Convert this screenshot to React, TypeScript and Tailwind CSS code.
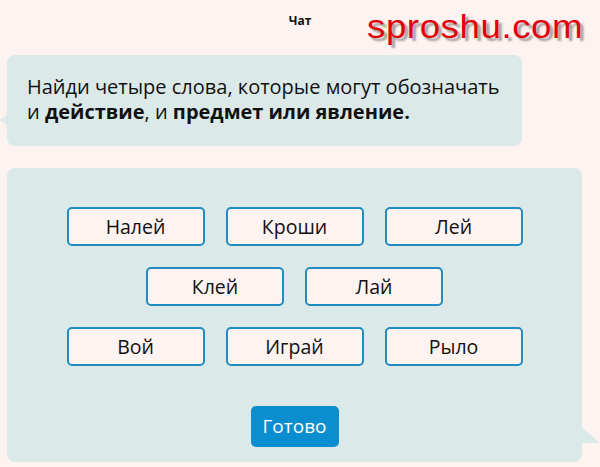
import React from "react";

const rows = [
  ["Налей", "Кроши", "Лей"],
  ["Клей", "Лай"],
  ["Вой", "Играй", "Рыло"],
];

export default function App() {
  return (
    <div
      className="relative w-[600px] h-[467px] overflow-hidden bg-[#fdf3f0] text-[#111]"
      style={{ fontFamily: '"Open Sans", "Noto Sans", sans-serif' }}
    >
      <div className="h-[55px] flex justify-center pt-[13px]">
        <span className="text-[12px] font-bold leading-[16px]">Чат</span>
      </div>

      <div
        className="absolute left-[367px] top-[6px] text-[34px] leading-[40px] text-[#e3000e] tracking-[0.5px] origin-left scale-x-[1.08] [text-shadow:3px_3px_2px_rgba(90,90,90,0.55)]"
        style={{ fontFamily: '"Liberation Sans", Arial, sans-serif' }}
      >
        sproshu.com
      </div>

      <div className="relative ml-[7px] w-[515px] h-[91px] rounded-[8px] bg-[#dce9e9] pl-[20px] pt-[20px]">
        <div className="absolute left-[-7px] top-[59px] w-0 h-0 border-t-[6px] border-t-transparent border-b-[6px] border-b-transparent border-r-[8px] border-r-[#dce9e9]" />
        <p className="text-[20px] leading-[24.5px]">
          Найди четыре слова, которые могут обозначать
          <br />и <b>действие</b>, и <b>предмет или явление.</b>
        </p>
      </div>

      <div className="relative ml-[7px] mt-[22px] w-[575px] h-[294px] rounded-[8px] bg-[#dce9e9] pt-[39px] flex flex-col items-center">
        <div className="absolute right-[-18px] bottom-[19px] w-[19px] h-[16px] bg-[#dce9e9] [clip-path:polygon(0_0,100%_100%,0_100%)]" />
        <div className="flex flex-col items-center gap-[21px]">
          {rows.map((row, i) => (
            <div key={i} className="flex gap-[21px]">
              {row.map((w) => (
                <div
                  key={w}
                  className="w-[138px] h-[39px] rounded-[5px] border-2 border-[#1f8cc2] bg-[#fdf3f0] flex items-center justify-center text-[19.5px]"
                >
                  {w}
                </div>
              ))}
            </div>
          ))}
        </div>
        <div className="mt-[40px] w-[88px] h-[41px] rounded-[5px] bg-[#0b8ecf] text-white text-[19px] flex items-center justify-center">
          Готово
        </div>
      </div>
    </div>
  );
}
